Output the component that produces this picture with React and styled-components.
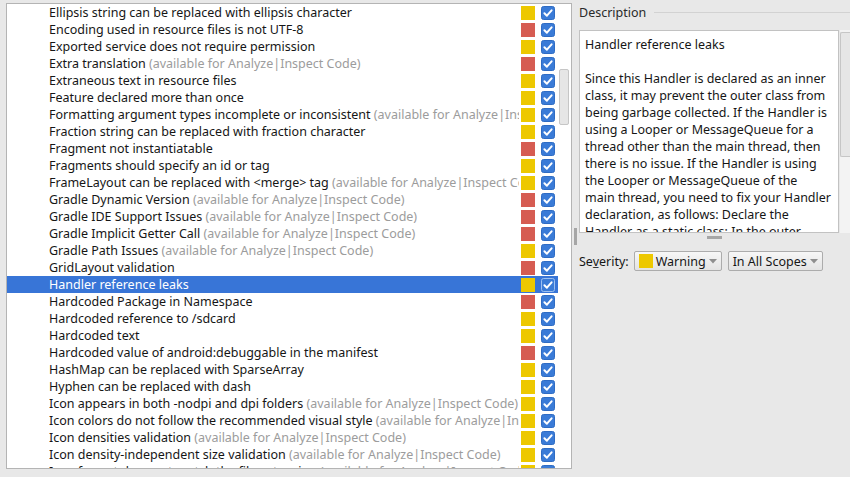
import React from "react";
import styled, { createGlobalStyle } from "styled-components";

const HINT = "(available for Analyze|Inspect Code)";

// severity: w = warning (yellow), e = error (red)
const inspections = [
  { name: "Ellipsis string can be replaced with ellipsis character", sev: "w" },
  { name: "Encoding used in resource files is not UTF-8", sev: "e" },
  { name: "Exported service does not require permission", sev: "w" },
  { name: "Extra translation", hint: true, sev: "e" },
  { name: "Extraneous text in resource files", sev: "w" },
  { name: "Feature declared more than once", sev: "w" },
  { name: "Formatting argument types incomplete or inconsistent", hint: true, sev: "w" },
  { name: "Fraction string can be replaced with fraction character", sev: "w" },
  { name: "Fragment not instantiatable", sev: "e" },
  { name: "Fragments should specify an id or tag", sev: "w" },
  { name: "FrameLayout can be replaced with <merge> tag", hint: true, sev: "w" },
  { name: "Gradle Dynamic Version", hint: true, sev: "e" },
  { name: "Gradle IDE Support Issues", hint: true, sev: "e" },
  { name: "Gradle Implicit Getter Call", hint: true, sev: "e" },
  { name: "Gradle Path Issues", hint: true, sev: "w" },
  { name: "GridLayout validation", sev: "e" },
  { name: "Handler reference leaks", sev: "w", selected: true },
  { name: "Hardcoded Package in Namespace", sev: "e" },
  { name: "Hardcoded reference to /sdcard", sev: "w" },
  { name: "Hardcoded text", sev: "w" },
  { name: "Hardcoded value of android:debuggable in the manifest", sev: "e" },
  { name: "HashMap can be replaced with SparseArray", sev: "w" },
  { name: "Hyphen can be replaced with dash", sev: "w" },
  { name: "Icon appears in both -nodpi and dpi folders", hint: true, sev: "w" },
  { name: "Icon colors do not follow the recommended visual style", hint: true, sev: "w" },
  { name: "Icon densities validation", hint: true, sev: "w" },
  { name: "Icon density-independent size validation", hint: true, sev: "w" },
  { name: "Icon format does not match the file extension", hint: true, sev: "w" },
];

const descLines = [
  "Since this Handler is declared as an inner",
  "class, it may prevent the outer class from",
  "being garbage collected. If the Handler is",
  "using a Looper or MessageQueue for a",
  "thread other than the main thread, then",
  "there is no issue. If the Handler is using",
  "the Looper or MessageQueue of the",
  "main thread, you need to fix your Handler",
  "declaration, as follows: Declare the",
  "Handler as a static class; In the outer",
];

const sevColor = { w: "#edc800", e: "#d65c52" };

const CheckBox = ({ selected }) => (
  <svg width="14" height="14" viewBox="0 0 14 14">
    <rect
      x="0.5"
      y="0.5"
      width="13"
      height="13"
      rx="2"
      fill="#3a7bd7"
      stroke={selected ? "#9cc0f0" : "#2f6cc4"}
    />
    <path
      d="M3.4 7.3 L5.9 9.7 L10.6 4.3"
      fill="none"
      stroke="#fff"
      strokeWidth="2"
      strokeLinecap="round"
      strokeLinejoin="round"
    />
  </svg>
);

const Arrow = () => (
  <svg width="8" height="5" viewBox="0 0 8 5">
    <path d="M0 0 L8 0 L4 4.5 Z" fill="#8e8e8e" />
  </svg>
);

const App = () => {
  return (
    <>
      <GlobalStyle />
      <StyledPage>
        <StyledList>
          <StyledRows>
            {inspections.map((item) => (
              <StyledRow key={item.name} $selected={item.selected}>
                <StyledName>
                  {item.name}
                  {item.hint && <StyledHint> {HINT}</StyledHint>}
                </StyledName>
                <StyledSeverity $color={sevColor[item.sev]} />
                <StyledCheck>
                  <CheckBox selected={item.selected} />
                </StyledCheck>
              </StyledRow>
            ))}
          </StyledRows>
          <StyledListScroll>
            <StyledListThumb />
          </StyledListScroll>
        </StyledList>

        <StyledVSplit>
          <StyledGrip $w={3} $h={17} />
        </StyledVSplit>

        <StyledRight>
          <StyledTitle>
            <span>Description</span>
            <StyledTitleLine />
          </StyledTitle>
          <StyledDescPane>
            <StyledDescText>
              <p>Handler reference leaks</p>
              <br />
              {descLines.map((line) => (
                <p key={line}>{line}</p>
              ))}
            </StyledDescText>
            <StyledDescScroll>
              <StyledDescThumb />
            </StyledDescScroll>
          </StyledDescPane>
          <StyledHSplit>
            <StyledGrip $w={15} $h={3} />
          </StyledHSplit>
          <StyledSeverityRow>
            <StyledLabel>{"Sev\u0332erity:"}</StyledLabel>
            <StyledDrop>
              <StyledSwatch />
              <span>Warning</span>
              <Arrow />
            </StyledDrop>
            <StyledDrop>
              <span>In All Scopes</span>
              <Arrow />
            </StyledDrop>
          </StyledSeverityRow>
        </StyledRight>
      </StyledPage>
    </>
  );
};

export default App;

const GlobalStyle = createGlobalStyle`
  html, body {
    margin: 0;
    padding: 0;
    background: #e8e8e8;
    overflow: hidden;
  }
  body {
    font-family: "Noto Sans", "Open Sans", sans-serif;
    font-size: 12.5px;
    color: #161616;
  }
  * {
    box-sizing: border-box;
  }
`;

const StyledPage = styled.div`
  display: flex;
  width: 850px;
  height: 477px;
  padding: 3px 0 8px 6px;
  overflow: hidden;
`;

const StyledList = styled.div`
  display: flex;
  width: 566px;
  flex-shrink: 0;
  background: #fff;
  border: 1px solid #b4b4b4;
  overflow: hidden;
`;

const StyledRows = styled.div`
  flex: 1;
  min-width: 0;
  overflow: hidden;
`;

const StyledRow = styled.div`
  display: flex;
  align-items: center;
  height: 17px;
  padding: 0 3px 0 42px;
  line-height: 17px;
  background: ${(p) => (p.$selected ? "#3875d7" : "transparent")};
  color: ${(p) => (p.$selected ? "#fff" : "#161616")};
`;

const StyledName = styled.div`
  flex: 1;
  min-width: 0;
  overflow: hidden;
  white-space: pre;
`;

const StyledHint = styled.span`
  color: #9c9c9c;
`;

const StyledSeverity = styled.div`
  width: 14px;
  height: 14px;
  margin-left: 2px;
  flex-shrink: 0;
  background: ${(p) => p.$color};
`;

const StyledCheck = styled.div`
  display: flex;
  width: 14px;
  height: 14px;
  margin-left: 6px;
  flex-shrink: 0;
`;

const StyledListScroll = styled.div`
  width: 13px;
  flex-shrink: 0;
  padding: 65px 2px 0 1px;
  background: #fff;
`;

const StyledListThumb = styled.div`
  height: 56px;
  border: 1px solid #c6c6c6;
  border-radius: 2px;
  background: #e6e6e6;
`;

const StyledVSplit = styled.div`
  display: flex;
  align-items: center;
  justify-content: center;
  width: 7px;
  flex-shrink: 0;
`;

const StyledGrip = styled.div`
  width: ${(p) => p.$w}px;
  height: ${(p) => p.$h}px;
  background-image: radial-gradient(circle, #a4a4a4 0.7px, transparent 0.9px);
  background-size: 2px 2px;
`;

const StyledRight = styled.div`
  display: flex;
  flex-direction: column;
  flex: 1;
  min-width: 0;
  overflow: hidden;
`;

const StyledTitle = styled.div`
  display: flex;
  align-items: center;
  gap: 8px;
  height: 19px;
  color: #2a2a2a;
`;

const StyledTitleLine = styled.div`
  flex: 1;
  height: 1px;
  background: #d2d2d2;
`;

const StyledDescPane = styled.div`
  display: flex;
  height: 203px;
  margin-top: 8px;
`;

const StyledDescText = styled.div`
  flex: 1;
  min-width: 0;
  padding: 5px 5px 0;
  background: #fff;
  border: 1px solid #c2c2c2;
  overflow: hidden;
  line-height: 17px;
  color: #161616;
  white-space: nowrap;
  p {
    margin: 0;
  }
`;

const StyledDescScroll = styled.div`
  width: 10px;
  flex-shrink: 0;
  margin-left: 1px;
  padding-top: 2px;
  background: #f3f3f3;
`;

const StyledDescThumb = styled.div`
  height: 125px;
  border: 1px solid #c6c6c6;
  border-right: none;
  border-radius: 2px 0 0 2px;
  background: #e6e6e6;
`;

const StyledHSplit = styled.div`
  display: flex;
  align-items: center;
  justify-content: center;
  height: 9px;
`;

const StyledSeverityRow = styled.div`
  display: flex;
  align-items: center;
  margin-top: 9px;
`;

const StyledLabel = styled.span`
  margin-right: 5px;
  color: #161616;
`;

const StyledDrop = styled.div`
  display: flex;
  align-items: center;
  gap: 3px;
  height: 20px;
  margin-right: 6px;
  padding: 0 4px;
  border: 1px solid #acacac;
  border-radius: 2px;
  background: linear-gradient(#f7f7f7, #e3e3e3);
  color: #161616;
`;

const StyledSwatch = styled.div`
  width: 14px;
  height: 14px;
  background: #edc800;
`;
